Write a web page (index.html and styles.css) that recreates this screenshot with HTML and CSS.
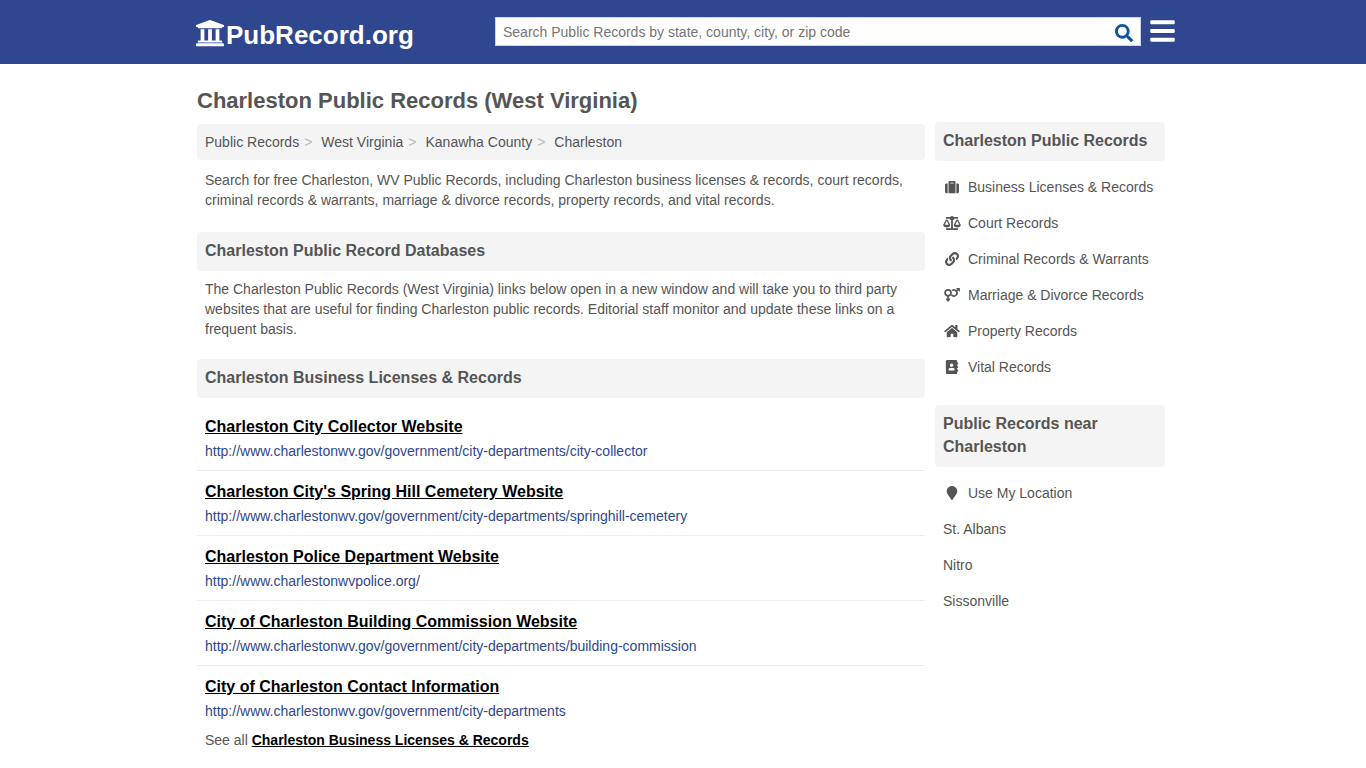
FILE: index.html
```html
<!DOCTYPE html>
<html lang="en">
<head>
  <meta charset="utf-8">
  <meta name="viewport" content="width=device-width, initial-scale=1">
  <title>Charleston Public Records (West Virginia)</title>
  <link rel="stylesheet" href="styles.css">
</head>
<body>
  <header class="header">
    <div class="header-inner">
      <a class="brand" href="#">
        <svg class="brand-icon" viewBox="0 0 512 512" aria-hidden="true"><path d="M496 128v16a8 8 0 0 1-8 8h-24v12c0 6.627-5.373 12-12 12H60c-6.627 0-12-5.373-12-12v-12H24a8 8 0 0 1-8-8v-16a8 8 0 0 1 4.941-7.392l232-88a7.996 7.996 0 0 1 6.118 0l232 88A8 8 0 0 1 496 128zm-24 304H40c-13.255 0-24 10.745-24 24v16a8 8 0 0 0 8 8h464a8 8 0 0 0 8-8v-16c0-13.255-10.745-24-24-24zM96 192v192H60c-6.627 0-12 5.373-12 12v20h416v-20c0-6.627-5.373-12-12-12h-36V192h-64v192h-64V192h-64v192h-64V192H96z"/></svg>
        <span>PubRecord.org</span>
      </a>
      <form class="search">
        <input type="text" class="search-input" aria-label="Search Public Records" placeholder="Search Public Records by state, county, city, or zip code">
        <button type="submit" class="search-button" aria-label="Search">
          <svg viewBox="0 0 512 512" width="18" height="18"><path d="M505 442.7L405.3 343c-4.5-4.5-10.6-7-17-7H372c27.6-35.3 44-79.7 44-128C416 93.1 322.9 0 208 0S0 93.1 0 208s93.1 208 208 208c48.3 0 92.7-16.4 128-44v16.3c0 6.4 2.5 12.5 7 17l99.7 99.7c9.4 9.4 24.6 9.4 33.9 0l28.3-28.3c9.4-9.4 9.4-24.6.1-34zM208 336c-70.7 0-128-57.2-128-128 0-70.7 57.2-128 128-128 70.7 0 128 57.2 128 128 0 70.7-57.2 128-128 128z"/></svg>
        </button>
      </form>
      <button type="button" class="menu-button" aria-label="Menu">
        <svg viewBox="0 0 448 512" width="25" height="28"><path d="M16 132h416c8.837 0 16-7.163 16-16V76c0-8.837-7.163-16-16-16H16C7.163 60 0 67.163 0 76v40c0 8.837 7.163 16 16 16zm0 160h416c8.837 0 16-7.163 16-16v-40c0-8.837-7.163-16-16-16H16c-8.837 0-16 7.163-16 16v40c0 8.837 7.163 16 16 16zm0 160h416c8.837 0 16-7.163 16-16v-40c0-8.837-7.163-16-16-16H16c-8.837 0-16 7.163-16 16v40c0 8.837 7.163 16 16 16z"/></svg>
      </button>
    </div>
  </header>

  <div class="page">
    <main class="content">
      <h1>Charleston Public Records (West Virginia)</h1>
      <nav class="breadcrumb" aria-label="Breadcrumb">
        <ol>
          <li><a href="#">Public Records</a></li>
          <li><a href="#">West Virginia</a></li>
          <li><a href="#">Kanawha County</a></li>
          <li><a href="#">Charleston</a></li>
        </ol>
      </nav>
      <p class="lead">Search for free Charleston, WV Public Records, including Charleston business licenses &amp; records, court records, criminal records &amp; warrants, marriage &amp; divorce records, property records, and vital records.</p>

      <h2>Charleston Public Record Databases</h2>
      <p class="intro">The Charleston Public Records (West Virginia) links below open in a new window and will take you to third party websites that are useful for finding Charleston public records. Editorial staff monitor and update these links on a frequent basis.</p>

      <h2>Charleston Business Licenses &amp; Records</h2>
      <ul class="results">
        <li>
          <a class="result-title" href="#">Charleston City Collector Website</a>
          <span class="result-url">http://www.charlestonwv.gov/government/city-departments/city-collector</span>
        </li>
        <li>
          <a class="result-title" href="#">Charleston City's Spring Hill Cemetery Website</a>
          <span class="result-url">http://www.charlestonwv.gov/government/city-departments/springhill-cemetery</span>
        </li>
        <li>
          <a class="result-title" href="#">Charleston Police Department Website</a>
          <span class="result-url">http://www.charlestonwvpolice.org/</span>
        </li>
        <li>
          <a class="result-title" href="#">City of Charleston Building Commission Website</a>
          <span class="result-url">http://www.charlestonwv.gov/government/city-departments/building-commission</span>
        </li>
        <li>
          <a class="result-title" href="#">City of Charleston Contact Information</a>
          <span class="result-url">http://www.charlestonwv.gov/government/city-departments</span>
        </li>
      </ul>
      <p class="see-all">See all <a href="#">Charleston Business Licenses &amp; Records</a></p>
    </main>

    <aside class="sidebar">
      <h2>Charleston Public Records</h2>
      <ul class="side-links">
        <li><a href="#">
          <svg class="icon" viewBox="0 0 512 512" aria-hidden="true"><path d="M128 480h256V80c0-26.5-21.5-48-48-48H176c-26.5 0-48 21.5-48 48v400zm64-384h128v32H192V96zm320 80v256c0 26.5-21.5 48-48 48h-48V128h48c26.5 0 48 21.5 48 48zM96 480H48c-26.5 0-48-21.5-48-48V176c0-26.5 21.5-48 48-48h48v352z"/></svg>
          Business Licenses &amp; Records</a></li>
        <li><a href="#">
          <svg class="icon" viewBox="0 0 640 512" aria-hidden="true"><path d="M256 336h-.02c0-16.18 1.34-8.73-85.05-181.51-17.65-35.29-68.19-35.36-85.87 0C-2.06 328.75.02 320.33.02 336H0c0 44.18 57.31 80 128 80s128-35.82 128-80zM128 176l72 144H56l72-144zm511.98 160c0-16.18 1.34-8.73-85.05-181.51-17.65-35.29-68.19-35.36-85.87 0-87.12 174.26-85.04 165.84-85.04 181.51H384c0 44.18 57.31 80 128 80s128-35.82 128-80h-.02zM440 320l72-144 72 144H440zm88 128H352V153.25c23.51-10.29 41.16-31.48 46.39-57.25H528c8.84 0 16-7.16 16-16V48c0-8.84-7.16-16-16-16H383.64C369.04 12.68 346.09 0 320 0s-49.04 12.68-63.64 32H112c-8.84 0-16 7.16-16 16v32c0 8.84 7.16 16 16 16h129.61c5.23 25.76 22.87 46.96 46.39 57.25V448H112c-8.84 0-16 7.16-16 16v32c0 8.84 7.16 16 16 16h416c8.84 0 16-7.16 16-16v-32c0-8.84-7.16-16-16-16z"/></svg>
          Court Records</a></li>
        <li><a href="#">
          <svg class="icon" viewBox="0 0 512 512" aria-hidden="true"><path d="M326.612 185.391c59.747 59.809 58.927 155.698.36 214.59-.11.12-.24.25-.36.37l-67.2 67.2c-59.27 59.27-155.699 59.262-214.96 0-59.27-59.26-59.27-155.7 0-214.96l37.106-37.106c9.84-9.84 26.786-3.3 27.294 10.606.648 17.722 3.826 35.527 9.69 52.721 1.986 5.822.567 12.262-3.783 16.612l-13.087 13.087c-28.026 28.026-28.905 73.66-1.155 101.96 28.024 28.579 74.086 28.749 102.325.51l67.2-67.19c28.191-28.191 28.073-73.757 0-101.83-3.701-3.694-7.429-6.564-10.341-8.569a16.037 16.037 0 0 1-6.947-12.606c-.396-10.567 3.348-21.456 11.698-29.806l21.054-21.055c5.521-5.521 14.182-6.199 20.584-1.731a152.482 152.482 0 0 1 20.522 17.197zM467.547 44.449c-59.261-59.262-155.69-59.27-214.96 0l-67.2 67.2c-.12.12-.25.25-.36.37-58.566 58.892-59.387 154.781.36 214.59a152.454 152.454 0 0 0 20.521 17.196c6.402 4.468 15.064 3.789 20.584-1.731l21.054-21.055c8.35-8.35 12.094-19.239 11.698-29.806a16.037 16.037 0 0 0-6.947-12.606c-2.912-2.005-6.64-4.875-10.341-8.569-28.073-28.073-28.191-73.639 0-101.83l67.2-67.19c28.239-28.239 74.3-28.069 102.325.51 27.75 28.3 26.872 73.934-1.155 101.96l-13.087 13.087c-4.35 4.35-5.769 10.79-3.783 16.612 5.864 17.194 9.042 34.999 9.69 52.721.509 13.906 17.454 20.446 27.294 10.606l37.106-37.106c59.271-59.259 59.271-155.699.001-214.959z"/></svg>
          Criminal Records &amp; Warrants</a></li>
        <li><a href="#">
          <svg class="icon icon-line" viewBox="0 0 576 512" aria-hidden="true"><circle cx="144" cy="176" r="108"/><path d="M144 284v212M72 412h144"/><path d="M296 96a108 108 0 1 1-24 152M452 112l92-92"/><path class="solid" d="M456 0h108q12 0 12 12v108q-4 14-18 6L450 18q-6-14 6-18z"/></svg>
          Marriage &amp; Divorce Records</a></li>
        <li><a href="#">
          <svg class="icon" viewBox="0 0 576 512" aria-hidden="true"><path d="M280.37 148.26L96 300.11V464a16 16 0 0 0 16 16l112.06-.29a16 16 0 0 0 15.92-16V368a16 16 0 0 1 16-16h64a16 16 0 0 1 16 16v95.64a16 16 0 0 0 16 16.05L464 480a16 16 0 0 0 16-16V300L295.67 148.26a12.19 12.19 0 0 0-15.3 0zM571.6 251.47L488 182.56V44.05a12 12 0 0 0-12-12h-56a12 12 0 0 0-12 12v72.61L318.47 43a48 48 0 0 0-61 0L4.34 251.47a12 12 0 0 0-1.6 16.9l25.5 31A12 12 0 0 0 45.15 301l235.22-193.74a12.19 12.19 0 0 1 15.3 0L530.9 301a12 12 0 0 0 16.9-1.6l25.5-31a12 12 0 0 0-1.7-16.93z"/></svg>
          Property Records</a></li>
        <li><a href="#">
          <svg class="icon" viewBox="0 0 448 512" aria-hidden="true"><path d="M436 160c6.6 0 12-5.4 12-12v-40c0-6.6-5.4-12-12-12h-20V48c0-26.5-21.5-48-48-48H48C21.5 0 0 21.5 0 48v416c0 26.5 21.5 48 48 48h320c26.5 0 48-21.5 48-48v-48h20c6.6 0 12-5.4 12-12v-40c0-6.6-5.4-12-12-12h-20v-64h20c6.6 0 12-5.4 12-12v-40c0-6.6-5.4-12-12-12h-20v-64h20zm-228-32c35.3 0 64 28.7 64 64s-28.7 64-64 64-64-28.7-64-64 28.7-64 64-64zm112 236.8c0 10.6-10 19.2-22.4 19.2H118.4C106 384 96 375.4 96 364.8v-19.2c0-31.8 30.1-57.6 67.2-57.6h5c12.3 5.1 25.7 8 39.8 8s27.6-2.9 39.8-8h5c37.1 0 67.2 25.8 67.2 57.6v19.2z"/></svg>
          Vital Records</a></li>
      </ul>

      <h2>Public Records near Charleston</h2>
      <ul class="side-links">
        <li><a href="#">
          <svg class="icon" viewBox="0 0 384 512" aria-hidden="true"><path d="M172.268 501.67C26.97 291.031 0 269.413 0 192 0 85.961 85.961 0 192 0s192 85.961 192 192c0 77.413-26.97 99.031-172.268 309.67-9.535 13.774-29.93 13.773-39.464 0z"/></svg>
          Use My Location</a></li>
        <li><a href="#">St. Albans</a></li>
        <li><a href="#">Nitro</a></li>
        <li><a href="#">Sissonville</a></li>
      </ul>
    </aside>
  </div>
</body>
</html>
```

FILE: styles.css
```css
* {
  box-sizing: border-box;
}
body {
  margin: 0;
  background-color: #fff;
  color: #555;
  font-family: "Liberation Sans", Arial, sans-serif;
  font-size: 14px;
  line-height: 20px;
}
h1, h2, p, ul, ol {
  margin: 0;
  padding: 0;
}
ul, ol {
  list-style: none;
}
a {
  color: inherit;
  text-decoration: none;
}
svg {
  display: block;
  fill: currentColor;
}
button {
  padding: 0;
  border: none;
  background: none;
  cursor: pointer;
}

/* header */
.header {
  background-color: #2e478f;
}
.header-inner {
  display: flex;
  align-items: flex-start;
  max-width: 984px;
  height: 64px;
  margin: 0 auto;
  padding: 17px 0 0 4px;
}
.brand {
  display: flex;
  gap: 1px;
  width: 300px;
  color: #fff;
  font-size: 26px;
  font-weight: bold;
  line-height: 36px;
}
.brand-icon {
  width: 30px;
  height: 32px;
}
.search {
  display: flex;
  flex: 1;
  height: 29px;
  border: 1px solid #c5d6f0;
  background-color: #fff;
}
.search-input {
  flex: 1;
  min-width: 0;
  padding: 0 7px;
  border: none;
  outline: none;
  background: none;
  font-family: inherit;
  font-size: 14px;
}
.search-input::placeholder {
  color: #757575;
}
.search-button {
  padding: 2px 7px 0;
  color: #0d539b;
}
.menu-button {
  margin-left: 9px;
  color: #fff;
}

/* layout */
.page {
  display: flex;
  gap: 10px;
  max-width: 972px;
  margin: 0 auto;
  padding-right: 4px;
}
.content {
  flex: 1;
  min-width: 0;
}
.sidebar {
  width: 230px;
  padding-top: 58px;
}
h1 {
  padding: 22px 0 8px;
  font-size: 22px;
  line-height: 30px;
}
h2 {
  padding: 7px 8px 9px;
  border-radius: 4px;
  background-color: #f4f4f4;
  font-size: 16px;
  line-height: 23px;
}

/* main column */
.breadcrumb {
  padding: 8px;
  border-radius: 4px;
  background-color: #f4f4f4;
}
.breadcrumb ol {
  display: flex;
  flex-wrap: wrap;
}
.breadcrumb li + li::before {
  content: ">";
  margin: 0 9px 0 5px;
  color: #bbb;
}
.lead {
  padding: 10px 8px 22px;
}
.intro {
  padding: 8px 8px 20px;
}
.results {
  padding-top: 8px;
}
.results li {
  padding: 9px 8px;
  border-bottom: 1px solid #eee;
}
.results li:last-child {
  border-bottom: none;
}
.result-title {
  display: table;
  margin-bottom: 3px;
  color: #000;
  font-size: 16px;
  font-weight: bold;
  line-height: 23px;
  text-decoration: underline;
}
.result-url {
  display: block;
  color: #2e478f;
}
.see-all {
  padding: 0 8px 20px;
}
.see-all a {
  color: #000;
  font-weight: bold;
  text-decoration: underline;
}

/* sidebar */
.side-links {
  padding: 8px 0 20px;
}
.side-links a {
  display: flex;
  align-items: center;
  gap: 7px;
  padding: 8px;
}
.icon {
  width: 18px;
  height: 14px;
}
.icon-line {
  fill: none;
  stroke: currentColor;
  stroke-width: 64;
}
.icon-line .solid {
  fill: currentColor;
  stroke: none;
}
```
